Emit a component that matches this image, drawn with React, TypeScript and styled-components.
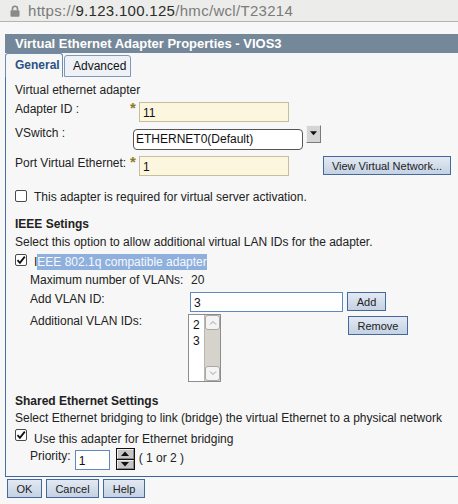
import React from 'react'
import styled, { createGlobalStyle } from 'styled-components'

const GlobalStyle = createGlobalStyle`
  html, body {
    margin: 0;
    padding: 0;
    background: #f7f7f7;
  }
  body {
    font-family: 'Liberation Sans', Arial, sans-serif;
    font-size: 12px;
    color: #222;
    overflow: hidden;
  }
`

const UrlBar = styled.div`
  height: 21px;
  border-bottom: 1px solid #b4b4b4;
  background: #ececea;
  display: flex;
  align-items: center;
  padding-left: 10px;
  gap: 8px;
`

const Url = styled.div`
  font-size: 15px;
  letter-spacing: 0.3px;
  color: #7b7b7b;
  white-space: nowrap;

  b {
    font-weight: normal;
    color: #2c2c2c;
  }
`

const Dialog = styled.div`
  margin: 12px 0 0 5px;
`

const TitleBar = styled.div`
  height: 19px;
  line-height: 19px;
  background: #758899;
  color: #fff;
  font-weight: bold;
  font-size: 13px;
  padding-left: 10px;
  white-space: nowrap;
`

const Tabs = styled.div`
  display: flex;
  align-items: flex-end;
  gap: 1px;
  height: 24px;
`

const Tab = styled.div<{ $active?: boolean; $w: number }>`
  box-sizing: border-box;
  width: ${p => p.$w}px;
  padding-left: ${p => (p.$active ? 9 : 8)}px;
  height: ${p => (p.$active ? 24 : 22)}px;
  line-height: ${p => (p.$active ? 23 : 20)}px;
  border: 1px solid ${p => (p.$active ? '#6c8cb4' : '#7e98ba')};
  border-bottom: ${p => (p.$active ? 'none' : '1px solid #7e98ba')};
  border-radius: 3px 3px 0 0;
  background: ${p => (p.$active ? '#f7f7f7' : '#eef1f6')};
  color: ${p => (p.$active ? '#2b5283' : '#111')};
  font-weight: ${p => (p.$active ? 'bold' : 'normal')};
`

const Panel = styled.div`
  border-left: 1px solid #4a71a6;
  border-bottom: 1px solid #3c64a0;
  padding: 6px 0 6px 9px;
`

const Line = styled.div<{ $mt?: number; $indent?: number }>`
  margin-top: ${p => p.$mt ?? 0}px;
  padding-left: ${p => p.$indent ?? 0}px;
  line-height: 14px;
  white-space: nowrap;
`

const Heading = styled(Line)`
  font-weight: bold;
`

const Row = styled.div<{ $mt: number; $indent?: number }>`
  display: flex;
  align-items: flex-start;
  margin-top: ${p => p.$mt}px;
  padding-left: ${p => p.$indent ?? 0}px;
  white-space: nowrap;
`

const Label = styled.div<{ $w?: number; $mt?: number }>`
  width: ${p => (p.$w ? `${p.$w}px` : 'auto')};
  flex-shrink: 0;
  margin-top: ${p => p.$mt ?? 0}px;
  line-height: 14px;
`

const Star = styled.span`
  width: 8px;
  margin-left: -3px;
  margin-right: 1px;
  color: #8c7a1c;
  font-weight: bold;
  font-size: 15px;
  line-height: 11px;
`

const TextField = styled.input<{ $w: number; $required?: boolean; $ml?: number; $mt?: number }>`
  box-sizing: border-box;
  width: ${p => p.$w}px;
  height: 20px;
  margin: ${p => p.$mt ?? 0}px 0 0 ${p => p.$ml ?? 0}px;
  padding: 2px 0 0 3px;
  font-family: 'Liberation Sans', Arial, sans-serif;
  font-size: 12px;
  color: #111;
  background: ${p => (p.$required ? '#fcf6df' : '#fff')};
  border: 1px solid ${p => (p.$required ? '#c5bf9e' : '#5f8abf')};
  border-radius: 0;
  outline: none;
`

const Select = styled.div`
  box-sizing: border-box;
  width: 170px;
  height: 21px;
  margin-top: 4px;
  padding: 0 2px;
  line-height: 19px;
  border: 1px solid #555;
  border-radius: 4px;
  background: #fff;
  color: #111;
`

const DropButton = styled.div`
  box-sizing: border-box;
  width: 15px;
  height: 18px;
  margin-left: 3px;
  background: #d5d5d5;
  border: 1px solid;
  border-color: #f2f2f2 #7a7a7a #7a7a7a #f2f2f2;
  display: flex;
  justify-content: center;
  padding-top: 5px;
`

const Button = styled.button<{ $w: number; $ml?: number; $mt?: number }>`
  box-sizing: border-box;
  width: ${p => p.$w}px;
  height: 19px;
  margin: ${p => p.$mt ?? 0}px 0 0 ${p => p.$ml ?? 0}px;
  padding: 0;
  font-family: 'Liberation Sans', Arial, sans-serif;
  font-size: 11px;
  color: #222;
  background: linear-gradient(#e3e9f2, #c4d2e4);
  border: 1px solid #46699c;
  border-radius: 0;
  cursor: pointer;
`

const Check = styled.span<{ $mt?: number }>`
  box-sizing: border-box;
  width: 12px;
  height: 12px;
  margin-top: ${p => p.$mt ?? 0}px;
  margin-right: 7px;
  flex-shrink: 0;
  border: 1px solid #4a4a4a;
  border-radius: 2px;
  background: #fff;
  display: flex;
  align-items: center;
  justify-content: center;
`

const Selected = styled.span`
  background: #8fb0dc;
  color: #f6f8fc;
  padding: 1px 0;
  line-height: 15px;
`

const Value = styled.span`
  margin-left: 1px;
`

const ListBox = styled.div`
  box-sizing: border-box;
  width: 33px;
  height: 68px;
  margin-left: -2px;
  border: 1px solid #8d8d8d;
  background: #fff;
  display: flex;
`

const ListItems = styled.div`
  flex: 1;
  padding: 2px 0 0 4px;
  line-height: 16px;
  color: #111;
`

const ScrollBar = styled.div`
  width: 15px;
  display: flex;
  flex-direction: column;
  justify-content: space-between;
  background: #d6d3cc;
  border-left: 1px solid #b9b6ae;
`

const ScrollArrow = styled.div`
  box-sizing: border-box;
  height: 15px;
  background: #f4f4f4;
  border: 1px solid #a9a9a9;
  border-radius: 3px;
  display: flex;
  align-items: center;
  justify-content: center;
`

const Spinner = styled.div`
  box-sizing: border-box;
  width: 19px;
  height: 22px;
  margin: -1px 4px 0 6px;
  border: 1px solid #111;
  display: flex;
  flex-direction: column;
  gap: 1px;
  background: #111;
`

const SpinHalf = styled.div`
  flex: 1;
  background: #c6c6c6;
  border: 1px solid;
  border-color: #eeeeee #888 #888 #eeeeee;
  display: flex;
  align-items: center;
  justify-content: center;
`

const Footer = styled.div`
  display: flex;
  gap: 4px;
  margin: 2px 0 0 2px;
`

const Lock = () => (
  <svg width="10" height="12" viewBox="0 0 10 12">
    <path d="M2.5 5.5V3.8a2.5 2.5 0 0 1 5 0v1.7" fill="none" stroke="#8a8a8a" strokeWidth="1.6" />
    <rect x="0.5" y="5.2" width="9" height="6.5" rx="1" fill="#8a8a8a" />
  </svg>
)

const Tick = () => (
  <svg width="10" height="10" viewBox="0 0 10 10">
    <path d="M1.5 5.2l2.4 2.6L8.8 1.6" fill="none" stroke="#111" strokeWidth="1.8" />
  </svg>
)

const Tri: React.FC<{ up?: boolean; color?: string; w?: number }> = ({ up, color = '#111', w = 7 }) => (
  <svg width={w} height={Math.ceil(w / 2) + 1} viewBox="0 0 8 5">
    <path d={up ? 'M0 5L4 0.5L8 5Z' : 'M0 0L4 4.5L8 0Z'} fill={color} />
  </svg>
)

const Chevron: React.FC<{ up?: boolean }> = ({ up }) => (
  <svg width="8" height="5" viewBox="0 0 8 5">
    <path d={up ? 'M1 4.5L4 1.5L7 4.5' : 'M1 0.5L4 3.5L7 0.5'} fill="none" stroke="#9a9a9a" strokeWidth="1" />
  </svg>
)

export default function App() {
  return (
    <>
      <GlobalStyle />
      <UrlBar>
        <Lock />
        <Url>
          https://<b>9.123.100.125</b>/hmc/wcl/T23214
        </Url>
      </UrlBar>

      <Dialog>
        <TitleBar>Virtual Ethernet Adapter Properties - VIOS3</TitleBar>
        <Tabs>
          <Tab $active $w={58}>General</Tab>
          <Tab $w={67}>Advanced</Tab>
        </Tabs>

        <Panel>
          <Line>Virtual ethernet adapter</Line>

          <Row $mt={5}>
            <Label $w={118}>Adapter ID :</Label>
            <Star>*</Star>
            <TextField $w={150} $required readOnly defaultValue="11" />
          </Row>

          <Row $mt={3}>
            <Label $w={118} $mt={1}>VSwitch :</Label>
            <Select>ETHERNET0(Default)</Select>
            <DropButton>
              <Tri w={7} />
            </DropButton>
          </Row>

          <Row $mt={6}>
            <Label $w={118}>Port Virtual Ethernet:</Label>
            <Star>*</Star>
            <TextField $w={150} $required readOnly defaultValue="1" />
            <Button $w={128} $ml={34}>View Virtual Network...</Button>
          </Row>

          <Row $mt={14}>
            <Check />
            <Label>This adapter is required for virtual server activation.</Label>
          </Row>

          <Heading $mt={13}>IEEE Setings</Heading>
          <Line $mt={4}>Select this option to allow additional virtual LAN IDs for the adapter.</Line>

          <Row $mt={6}>
            <Check $mt={-1}>
              <Tick />
            </Check>
            <Label>
              I<Selected>EEE 802.1q compatible adapter</Selected>
            </Label>
          </Row>

          <Row $mt={3} $indent={15}>
            <Label $w={160}>Maximum number of VLANs:</Label>
            <Value>20</Value>
          </Row>

          <Row $mt={5} $indent={15}>
            <Label $w={160}>Add VLAN ID:</Label>
            <TextField $w={153} readOnly defaultValue="3" />
            <Button $w={39} $ml={4}>Add</Button>
          </Row>

          <Row $mt={2} $indent={15}>
            <Label $w={160}>Additional VLAN IDs:</Label>
            <ListBox>
              <ListItems>
                <div>2</div>
                <div>3</div>
              </ListItems>
              <ScrollBar>
                <ScrollArrow>
                  <Chevron up />
                </ScrollArrow>
                <ScrollArrow>
                  <Chevron />
                </ScrollArrow>
              </ScrollBar>
            </ListBox>
            <Button $w={60} $ml={127} $mt={2}>Remove</Button>
          </Row>

          <Heading $mt={12}>Shared Ethernet Settings</Heading>
          <Line $mt={3}>Select Ethernet bridging to link (bridge) the virtual Ethernet to a physical network</Line>

          <Row $mt={4}>
            <Check>
              <Tick />
            </Check>
            <Label $mt={3}>Use this adapter for Ethernet bridging</Label>
          </Row>

          <Row $mt={3} $indent={15}>
            <Label>Priority:</Label>
            <TextField $w={35} $ml={4} $mt={1} readOnly defaultValue="1" />
            <Spinner>
              <SpinHalf>
                <Tri up w={8} />
              </SpinHalf>
              <SpinHalf>
                <Tri w={8} />
              </SpinHalf>
            </Spinner>
            <Label $mt={2}>( 1 or 2 )</Label>
          </Row>
        </Panel>

        <Footer>
          <Button $w={35}>OK</Button>
          <Button $w={53}>Cancel</Button>
          <Button $w={42}>Help</Button>
        </Footer>
      </Dialog>
    </>
  )
}
